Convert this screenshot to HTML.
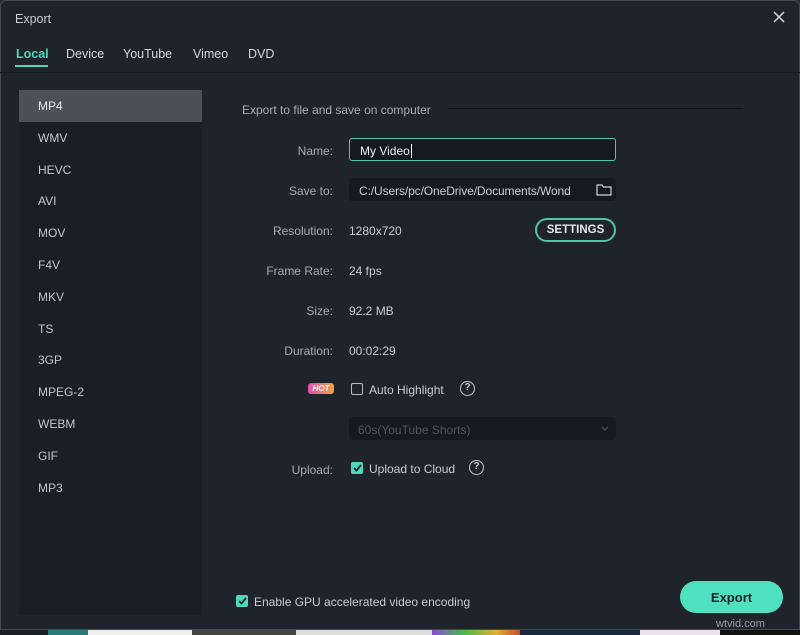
<!DOCTYPE html>
<html><head><meta charset="utf-8"><style>
*{margin:0;padding:0;box-sizing:border-box}
body{width:800px;height:635px;background:#2a2d33;font-family:"Liberation Sans",sans-serif;overflow:hidden;position:relative}
.dlg{position:absolute;left:0;top:0;width:800px;height:630px;background:#1f242c;box-shadow:inset 0 0 0 1px #454b53;border-radius:6px 6px 0 0}
.t{position:absolute;white-space:nowrap;margin-top:1px}
.title{left:15px;top:11px;font-size:12.5px;color:#c9ccd0}
.tabs span{position:absolute;top:47px;font-size:12.5px;color:#d4d7da}
.sep{position:absolute;left:0;top:72px;width:800px;height:1px;background:#171b20}
.left{position:absolute;left:19px;top:90px;width:183px;height:525px;background:#1a1e25;border-radius:2px}
.left div{height:31.8px;line-height:33px;padding-left:19px;font-size:12px;color:#c4c8cc}
.left .sel{background:#4c5057;color:#e8eaec}
.lbl{font-size:12px;color:#a9adb2;text-align:right;width:100px;left:233px}
.val{font-size:12px;color:#c9ccd0;left:349px}
.box{position:absolute;left:349px;width:267px;height:23px;background:#161a20;border-radius:3px}
.cb{position:absolute;width:12px;height:12px;border-radius:2px}
.q{position:absolute;width:15px;height:15px;border:1.5px solid #c9ccd0;border-radius:50%;font-size:10px;color:#c9ccd0;text-align:center;line-height:12px;font-weight:bold}
</style></head><body>
<div class="dlg">
<div class="t title">Export</div>
<svg style="position:absolute;left:773px;top:11px" width="12" height="12"><path d="M1 1L11 11M11 1L1 11" stroke="#d8dadc" stroke-width="1.5"/></svg>
<div class="tabs">
<span style="left:16px;color:#4fd8bc;font-weight:bold">Local</span>
<span style="left:66px">Device</span><span style="left:123px">YouTube</span><span style="left:193px">Vimeo</span><span style="left:248px">DVD</span>
</div>
<div style="position:absolute;left:15px;top:65px;width:33px;height:2px;background:#4fd8bc"></div>
<div class="sep"></div>
<div class="left">
<div class="sel">MP4</div><div>WMV</div><div>HEVC</div><div>AVI</div><div>MOV</div><div>F4V</div><div>MKV</div><div>TS</div><div>3GP</div><div>MPEG-2</div><div>WEBM</div><div>GIF</div><div>MP3</div>
</div>
<div class="t" style="left:242px;top:102px;font-size:12px;color:#a9adb2">Export to file and save on computer</div>
<div style="position:absolute;left:448px;top:108px;width:295px;height:1px;background:#0f1216"></div>

<div class="t lbl" style="top:143px">Name:</div>
<div class="box" style="top:138px;border:1.5px solid #4fc4a8"></div>
<div class="t" style="left:360px;top:143px;font-size:12px;color:#eef0f2">My Video<span style="border-left:1px solid #fff;margin-left:1px"></span></div>

<div class="t lbl" style="top:183px">Save to:</div>
<div class="box" style="top:178px"></div>
<div class="t" style="left:359px;top:183px;font-size:12px;color:#c9ccd0;letter-spacing:-0.1px">C:/Users/pc/OneDrive/Documents/Wond</div>
<svg style="position:absolute;left:596px;top:183px" width="16" height="13"><path d="M1 2H6L7.5 4H15V12H1Z" fill="none" stroke="#d0d3d6" stroke-width="1.2"/></svg>

<div class="t lbl" style="top:223px">Resolution:</div>
<div class="t val" style="top:223px">1280x720</div>
<div style="position:absolute;left:535px;top:218px;width:81px;height:24px;border:2px solid #4fc4a8;border-radius:12px;text-align:center;line-height:21px;font-size:11.5px;font-weight:bold;color:#e6e8ea">SETTINGS</div>

<div class="t lbl" style="top:263px">Frame Rate:</div><div class="t val" style="top:263px">24 fps</div>
<div class="t lbl" style="top:303px">Size:</div><div class="t val" style="top:303px">92.2 MB</div>
<div class="t lbl" style="top:343px">Duration:</div><div class="t val" style="top:343px">00:02:29</div>

<div style="position:absolute;left:308px;top:383px;width:26px;height:11px;border-radius:3px;background:linear-gradient(90deg,#e04fb0,#f2a23c);font-size:8px;color:#fff;font-style:italic;font-weight:bold;text-align:center;line-height:11px">HOT</div>
<div class="cb" style="left:351px;top:383px;border:1.3px solid #b9bdc2"></div>
<div class="t" style="left:369px;top:382px;font-size:12px;color:#c9ccd0">Auto Highlight</div>
<div class="q" style="left:460px;top:381px">?</div>

<div class="box" style="top:417px"></div>
<div class="t" style="left:358px;top:422px;font-size:12px;color:#50555c">60s(YouTube Shorts)</div>
<svg style="position:absolute;left:601px;top:426px" width="8" height="6"><path d="M1 1L4 4L7 1" fill="none" stroke="#50555c" stroke-width="1.2"/></svg>

<div class="t lbl" style="top:462px">Upload:</div>
<div class="cb" style="left:351px;top:462px;background:#4fd8bc"></div>
<svg style="position:absolute;left:352px;top:463px" width="11" height="10"><path d="M2 5L4.5 7.5L9 2" fill="none" stroke="#1f242c" stroke-width="1.8"/></svg>
<div class="t" style="left:369px;top:461px;font-size:12px;color:#c9ccd0">Upload to Cloud</div>
<div class="q" style="left:469px;top:460px">?</div>

<div class="cb" style="left:236px;top:595px;background:#4fd8bc"></div>
<svg style="position:absolute;left:237px;top:596px" width="11" height="10"><path d="M2 5L4.5 7.5L9 2" fill="none" stroke="#1f242c" stroke-width="1.8"/></svg>
<div class="t" style="left:254px;top:594px;font-size:12px;color:#c9ccd0">Enable GPU accelerated video encoding</div>

<div style="position:absolute;left:680px;top:581px;width:103px;height:32px;border-radius:16px;background:#4fe0c0;text-align:center;line-height:33px;font-size:13px;font-weight:bold;color:#1c2228">Export</div>
<div class="t" style="left:716px;top:617px;font-size:11px;color:#9aa0a6">wtvid.com</div>
</div>
<div style="position:absolute;left:0;top:630px;width:800px;height:5px;background:linear-gradient(90deg,#1a1f24 0,#1a1f24 6%,#2a7c7a 6%,#2a7c7a 11%,#eee 11%,#eee 24%,#444 24%,#444 37%,#ddd 37%,#ddd 54%,#8a4fd0 54%,#4db84d 58%,#e0b030 62%,#c05030 65%,#1a2a3a 65%,#1a2a3a 80%,#e8e0ea 80%,#e8e0ea 90%,#111 90%)"></div>
</body></html>
